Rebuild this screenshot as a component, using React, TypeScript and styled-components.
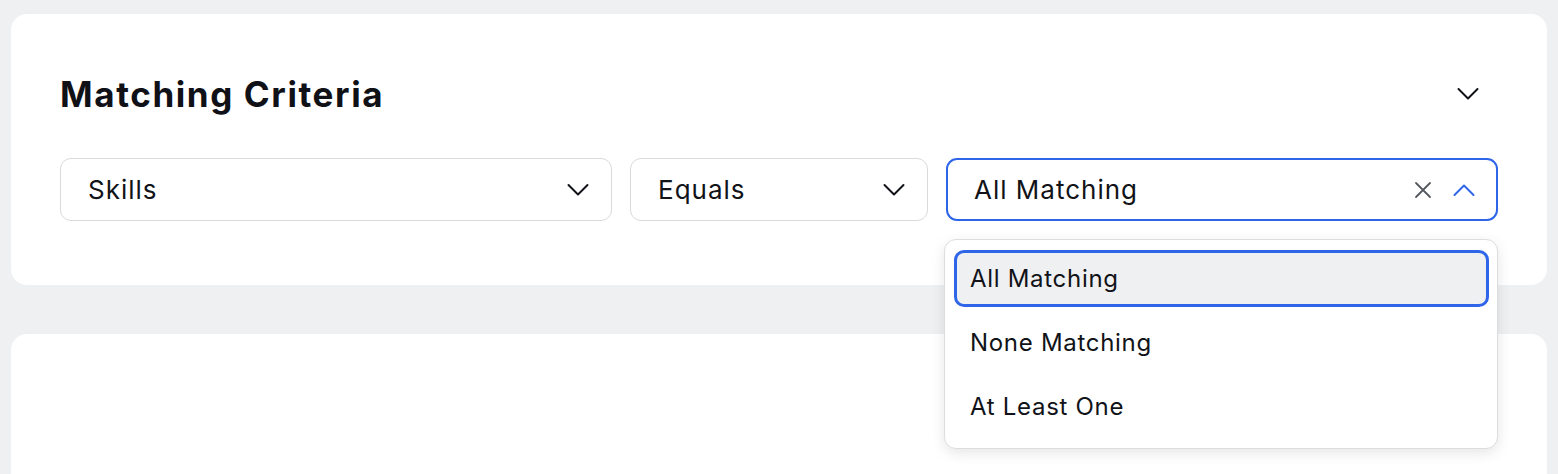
import { useState } from "react";
import { createGlobalStyle, styled } from "styled-components";

const GlobalStyle = createGlobalStyle`
  * { box-sizing: border-box; }
  body {
    margin: 0;
    background: #eff0f2;
    font-family: Inter, "Noto Sans", "Liberation Sans", sans-serif;
    color: #111318;
  }
`;

const Page = styled.div`
  display: flex;
  flex-direction: column;
  gap: 49px;
  padding: 14px 11px 0;
  height: 474px;
  overflow: hidden;
`;

const Card = styled.section<{ $tall?: boolean }>`
  background: #ffffff;
  border-radius: 16px;
  padding: 48px 49px 64px;
  min-height: ${(p) => (p.$tall ? "240px" : "auto")};
`;

const Header = styled.div`
  display: flex;
  align-items: center;
  justify-content: space-between;
  height: 64px;
  margin-bottom: 32px;
`;

const Title = styled.h2`
  margin: 0;
  font-size: 35px;
  font-weight: 700;
  letter-spacing: 1.6px;
  color: #0f1117;
`;

const CollapseButton = styled.button`
  display: flex;
  align-items: center;
  justify-content: center;
  width: 40px;
  height: 40px;
  margin-right: 10px;
  border: none;
  background: none;
  padding: 0;
  cursor: pointer;
  color: #111318;
`;

const Row = styled.div`
  display: grid;
  grid-template-columns: 1fr 298px 1fr;
  gap: 18px;
`;

const SelectWrap = styled.div`
  position: relative;
`;

const SelectBox = styled.div<{ $open?: boolean }>`
  display: flex;
  align-items: center;
  height: 63px;
  padding: 0 ${(p) => (p.$open ? "21px" : "22px")} 0 ${(p) => (p.$open ? "26px" : "27px")};
  border: ${(p) => (p.$open ? "2px solid #2f66e9" : "1.5px solid #dadadd")};
  border-radius: 11px;
  background: #fff;
  font-size: 26px;
  letter-spacing: 1px;
  cursor: pointer;
`;

const Value = styled.span`
  flex: 1;
`;

const Icons = styled.span`
  display: flex;
  align-items: center;
  gap: 21px;
`;

const Menu = styled.ul`
  position: absolute;
  top: 81px;
  left: -2px;
  right: 0;
  margin: 0;
  padding: 10px 8px 13px 9px;
  list-style: none;
  display: flex;
  flex-direction: column;
  gap: 7px;
  background: #fff;
  border: 1px solid #dcdde0;
  border-radius: 12px;
  box-shadow: 0 4px 14px rgba(0, 0, 0, 0.1);
  z-index: 10;
`;

const Option = styled.li<{ $active?: boolean }>`
  display: flex;
  align-items: center;
  height: 57px;
  padding: 0 13px;
  border-radius: 10px;
  font-size: 24px;
  letter-spacing: 0.7px;
  background: ${(p) => (p.$active ? "#eff0f2" : "transparent")};
  border: 3px solid ${(p) => (p.$active ? "#2f66e9" : "transparent")};
  cursor: pointer;
`;

const Chevron = ({ up, color = "#111318" }: { up?: boolean; color?: string }) => (
  <svg width="22" height="22" viewBox="0 0 22 22" fill="none" stroke={color} strokeWidth="2" strokeLinecap="round" strokeLinejoin="round">
    {up ? <path d="M1.5 16l9.5-9.5 9.5 9.5" /> : <path d="M1.5 6l9.5 9.5 9.5-9.5" />}
  </svg>
);

const Cross = () => (
  <svg width="18" height="18" viewBox="0 0 18 18" fill="none" stroke="#55585e" strokeWidth="1.8" strokeLinecap="round">
    <path d="M2 2l14 14M16 2L2 16" />
  </svg>
);

const options = ["All Matching", "None Matching", "At Least One"];

export default function App() {
  const [value, setValue] = useState("All Matching");
  const [open, setOpen] = useState(true);

  return (
    <>
      <GlobalStyle />
      <Page>
        <Card>
          <Header>
            <Title>Matching Criteria</Title>
            <CollapseButton aria-label="Collapse">
              <Chevron />
            </CollapseButton>
          </Header>
          <Row>
            <SelectBox>
              <Value>Skills</Value>
              <Chevron />
            </SelectBox>
            <SelectBox>
              <Value>Equals</Value>
              <Chevron />
            </SelectBox>
            <SelectWrap>
              <SelectBox $open={open} onClick={() => setOpen(!open)}>
                <Value>{value}</Value>
                <Icons>
                  <Cross />
                  <Chevron up={open} color={open ? "#2f66e9" : "#111318"} />
                </Icons>
              </SelectBox>
              {open && (
                <Menu>
                  {options.map((o) => (
                    <Option
                      key={o}
                      $active={o === value}
                      onClick={() => {
                        setValue(o);
                        setOpen(false);
                      }}
                    >
                      {o}
                    </Option>
                  ))}
                </Menu>
              )}
            </SelectWrap>
          </Row>
        </Card>
        <Card $tall />
      </Page>
    </>
  );
}
